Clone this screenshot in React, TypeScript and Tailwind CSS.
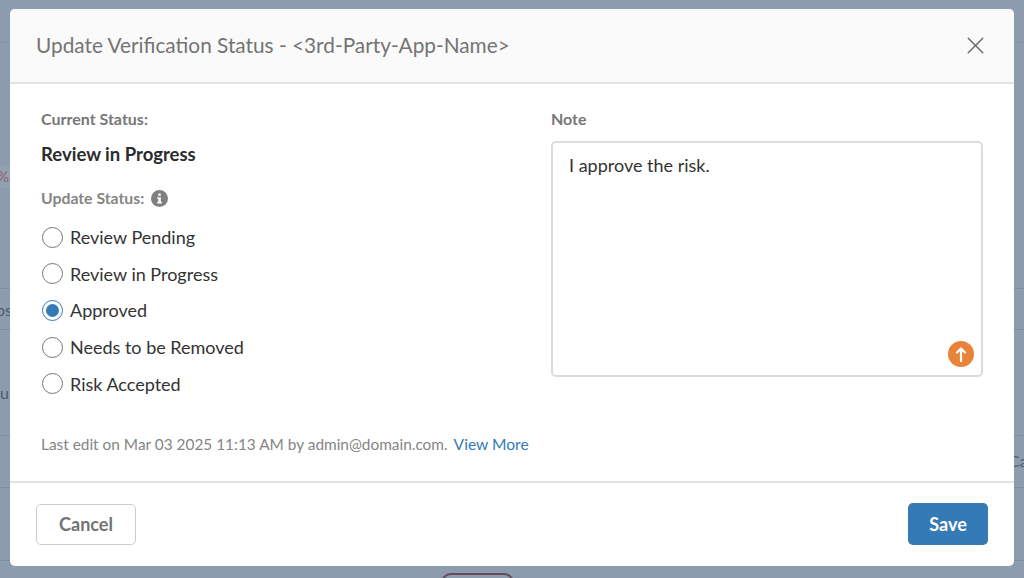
import React from 'react';
import { X } from 'lucide-react';

const statuses = ['Review Pending', 'Review in Progress', 'Approved', 'Needs to be Removed', 'Risk Accepted'];

const App = () => {
    return (
        <div className="relative w-[1024px] h-[578px] overflow-hidden bg-[#8c9bad] font-['Lato',sans-serif]">
            {/* Page dimmed behind the modal */}
            <div className="absolute left-0 right-0 top-[42px] h-px bg-[#84939f]" />
            <div className="absolute left-0 right-0 top-[288px] h-px bg-[#7f8e9f]" />
            <div className="absolute left-0 right-0 top-[329px] h-px bg-[#7f8e9f]" />
            <div className="absolute left-0 right-0 top-[435px] h-px bg-[#7f8e9f]" />
            <div className="absolute left-0 right-0 top-[487px] h-px bg-[#7f8e9f]" />
            <div className="absolute left-0 right-0 top-[560px] h-px bg-[#7f8e9f]" />
            <div className="absolute left-0 top-[166px] w-[10px] h-[22px] bg-[#93a0b1]" />
            <span className="absolute left-[-3px] top-[166px] text-[15px] leading-[20px] text-[#8f6478]">%</span>
            <span className="absolute left-[-4px] top-[300px] text-[16px] leading-[20px] text-[#4e5c6d]">ps</span>
            <span className="absolute left-[0px] top-[383px] text-[16px] leading-[20px] text-[#4e5c6d]">u</span>
            <span className="absolute left-[1009px] top-[451px] text-[16px] leading-[20px] text-[#4e5c6d]">Ca</span>
            <div className="absolute left-[441px] top-[573px] w-[73px] h-[30px] rounded-[10px] border-2 border-[#67485c]" />

            {/* Modal */}
            <div className="absolute left-[10px] top-[9px] w-[1004px] h-[557px] flex flex-col bg-white rounded-[5px] overflow-hidden">
                <div className="h-[75px] shrink-0 flex items-center justify-between pl-[26px] pr-[24px] pb-[1px] bg-[#fafafa] border-b-2 border-[#e3e3e3]">
                    <h1 className="text-[20.8px] text-[#747474]">Update Verification Status - &lt;3rd-Party-App-Name&gt;</h1>
                    <X size={29} strokeWidth={1.2} className="text-[#6b6b6b]" />
                </div>

                <div className="flex-1 flex pl-[31px] pr-[31px] pt-[25px]">
                    <div className="w-[510px] shrink-0 flex flex-col">
                        <div className="text-[16px] leading-[20px] font-bold text-[#777777]">Current Status:</div>
                        <div className="mt-[14px] text-[18.5px] leading-[22px] font-bold text-[#2b2b2b]">Review in Progress</div>
                        <div className="mt-[23px] flex items-center gap-[7px] text-[15.8px] leading-[20px] font-bold text-[#858585]">
                            Update Status:
                            <span className="w-[17px] h-[17px] rounded-full bg-[#808080] flex items-center justify-center">
                                <svg width="9" height="11" viewBox="0 0 9 11" fill="#ffffff">
                                    <rect x="3.2" y="0.4" width="2.6" height="2.4" rx="0.6" />
                                    <path d="M2.3 4.2h3.5v4.6h1v1.6H2.3V8.8h1V5.8h-1z" />
                                </svg>
                            </span>
                        </div>
                        <div className="mt-[18px] flex flex-col gap-[14.7px]">
                            {statuses.map((status) => (
                                <label key={status} className="flex items-center gap-[7px] h-[22px] text-[18px] leading-[22px] text-[#333333]">
                                    {status === 'Approved' ? (
                                        <span className="ml-[1px] w-[21px] h-[21px] rounded-full border-[1.5px] border-[#337ab7] flex items-center justify-center">
                                            <span className="w-[13px] h-[13px] rounded-full bg-[#337ab7]" />
                                        </span>
                                    ) : (
                                        <span className="ml-[1px] w-[21px] h-[21px] rounded-full border-[1.5px] border-[#767676]" />
                                    )}
                                    {status}
                                </label>
                            ))}
                        </div>
                        <div className="mt-[39px] text-[15.4px] leading-[20px] text-[#858585] whitespace-nowrap">
                            Last edit on Mar 03 2025 11:13 AM by admin@domain.com.
                            <span className="ml-[6px] text-[15.6px] text-[#337ab7]">View More</span>
                        </div>
                    </div>

                    <div className="flex-1 flex flex-col">
                        <div className="text-[16px] leading-[20px] font-bold text-[#777777]">Note</div>
                        <div className="relative mt-[12px] h-[236px] rounded-[5px] border-2 border-[#dcdcdc] px-[16px] py-[11px] text-[18px] leading-[22px] text-[#333333]">
                            I approve the risk.
                            <span className="absolute right-[7px] bottom-[8px] w-[26px] h-[26px] rounded-full bg-[#e8833a] flex items-center justify-center">
                                <svg width="12" height="15" viewBox="0 0 12 15" fill="none" stroke="#ffffff" strokeWidth="2.2" strokeLinecap="round" strokeLinejoin="round">
                                    <path d="M6 14V1.5M2 5.5 6 1.5l4 4" />
                                </svg>
                            </span>
                        </div>
                    </div>
                </div>

                <div className="h-[85px] shrink-0 flex items-center justify-between pl-[26px] pr-[26px] pb-[1px] border-t-2 border-[#e3e3e3]">
                    <button className="w-[100px] h-[41px] mt-[1px] rounded-[5px] border border-[#cccccc] bg-white text-[18px] font-bold text-[#737373]">Cancel</button>
                    <button className="w-[80px] h-[42px] rounded-[5px] bg-[#337ab7] text-[18px] font-bold text-white">Save</button>
                </div>
            </div>
        </div>
    );
};

export default App;
